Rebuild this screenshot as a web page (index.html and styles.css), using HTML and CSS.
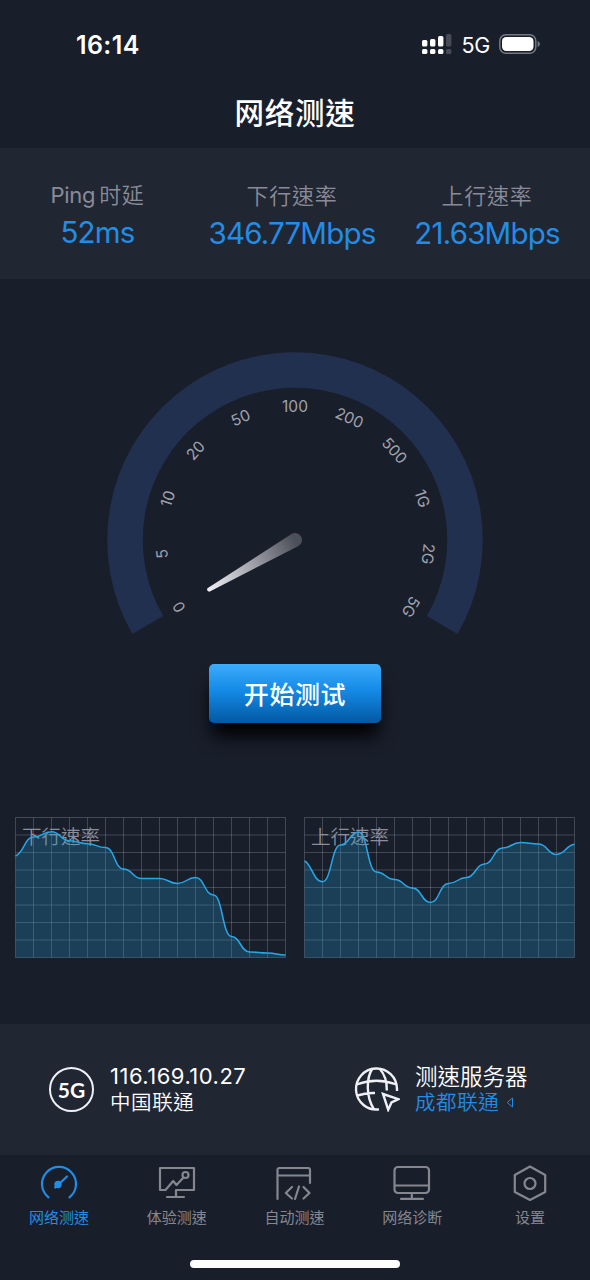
FILE: index.html
```html
<!DOCTYPE html>
<html lang="zh-Hant">
<head>
<meta charset="utf-8">
<title>网络测速</title>
<link rel="stylesheet" href="styles.css">
</head>
<body>
<div class="app">
  <header class="status">
    <span class="time">16:14</span>
    <div class="indicators">
      <svg class="signal" width="30" height="20" viewBox="0 0 30 20">
        <g fill="#fff"><rect x="0" y="6" width="5.4" height="6.5" rx="1.6"/><rect x="8" y="5" width="5.4" height="7.5" rx="1.6"/><rect x="16" y="2" width="5.4" height="10.5" rx="1.6"/><rect x="0" y="15" width="5.4" height="5" rx="1.6"/><rect x="8" y="15" width="5.4" height="5" rx="1.6"/><rect x="16" y="15" width="5.4" height="5" rx="1.6"/></g>
        <g fill="#474b57"><rect x="24" y="0" width="5.4" height="12.5" rx="1.6"/><rect x="24" y="15" width="5.4" height="5" rx="1.6"/></g>
      </svg>
      <span class="network">5G</span>
      <svg class="battery" width="42" height="20" viewBox="0 0 42 20">
        <rect x=".8" y=".8" width="36" height="18.4" rx="6" fill="none" stroke="#74777f" stroke-width="1.5"/>
        <rect x="3" y="3" width="31.5" height="14" rx="4.2" fill="#fff"/>
        <path d="M38.6 6.8Q41 8 41 10T38.6 13.2Z" fill="#74777f"/>
      </svg>
    </div>
  </header>
  <h1 class="title">网络测速</h1>

  <section class="stats">
    <div class="stat stat-ping"><span class="stat-label"><span class="latin">Ping</span>时延</span><span class="stat-value">52ms</span></div>
    <div class="stat"><span class="stat-label">下行速率</span><span class="stat-value">346.77Mbps</span></div>
    <div class="stat"><span class="stat-label">上行速率</span><span class="stat-value">21.63Mbps</span></div>
  </section>

  <main class="meter">
    <svg class="gauge" width="376" height="290" viewBox="-188 -188 376 290">
      <defs>
        <linearGradient id="needle" gradientUnits="userSpaceOnUse" x1="0" y1="101" x2="0" y2="0">
          <stop offset="0" stop-color="#f0f0f5"/><stop offset=".5" stop-color="#a2a3ab"/><stop offset="1" stop-color="#4c4f59"/>
        </linearGradient>
      </defs>
      <path d="M-147.2 85A170 170 0 1 1 147.2 85" fill="none" stroke="#22304f" stroke-width="35.5"/>
      <g class="ticks">
        <text transform="rotate(-120)" y="-128.3">0</text>
        <text transform="rotate(-96)" y="-128.3">5</text>
        <text transform="rotate(-72)" y="-128.3">10</text>
        <text transform="rotate(-48)" y="-128.3">20</text>
        <text transform="rotate(-24)" y="-128.3">50</text>
        <text y="-128.3">100</text>
        <text transform="rotate(24)" y="-128.3">200</text>
        <text transform="rotate(48)" y="-128.3">500</text>
        <text transform="rotate(72)" y="-128.3">1G</text>
        <text transform="rotate(96)" y="-128.3">2G</text>
        <text transform="rotate(120)" y="-128.3">5G</text>
      </g>
      <path transform="rotate(60)" d="M-7 0A7 7 0 0 1 7 0L1.9 100Q0 102.500 -1.900 100Z" fill="url(#needle)"/>
    </svg>
    <button class="start">开始测试</button>
  </main>

  <section class="charts">
    <div class="chart">
      <svg viewBox="-.5 -.5 271 140" width="271" height="140">
        <path class="grid" d="M0 0V140M18 0V140M36 0V140M54 0V140M72 0V140M90 0V140M108 0V140M126 0V140M144 0V140M162 0V140M180 0V140M198 0V140M216 0V140M234 0V140M252 0V140M270 0V140M0 0H270M0 17.500H270M0 35H270M0 52.500H270M0 70H270M0 87.500H270M0 105H270M0 122.500H270M0 140H270"/>
      </svg>
      <span class="chart-label">下行速率</span>
      <svg class="curve" viewBox="-.5 -.5 271 140" width="271" height="140">
        <path class="area" d="M0 38.500C9 35 9 19.500 18 19.500S27 14.200 36 14.200S45 23.200 54 23.200S63 26.200 72 26.200S81 30 90 30S99 51.500 108 51.500S117 61 126 61S135 61 144 61S153 66 162 66S171 60 180 60S189 77.500 198 77.500S207 119 216 119S225 134.500 234 134.500S243 135.500 252 135.500S261 137.500 270 137.500V140H0Z"/>
        <path class="line" d="M0 38.500C9 35 9 19.500 18 19.500S27 14.200 36 14.200S45 23.200 54 23.200S63 26.200 72 26.200S81 30 90 30S99 51.500 108 51.500S117 61 126 61S135 61 144 61S153 66 162 66S171 60 180 60S189 77.500 198 77.500S207 119 216 119S225 134.500 234 134.500S243 135.500 252 135.500S261 137.500 270 137.500"/>
      </svg>
    </div>
    <div class="chart">
      <svg viewBox="-.5 -.5 271 140" width="271" height="140">
        <path class="grid" d="M0 0V140M18 0V140M36 0V140M54 0V140M72 0V140M90 0V140M108 0V140M126 0V140M144 0V140M162 0V140M180 0V140M198 0V140M216 0V140M234 0V140M252 0V140M270 0V140M0 0H270M0 17.500H270M0 35H270M0 52.500H270M0 70H270M0 87.500H270M0 105H270M0 122.500H270M0 140H270"/>
      </svg>
      <span class="chart-label">上行速率</span>
      <svg class="curve" viewBox="-.5 -.5 271 140" width="271" height="140">
        <path class="area" d="M0 43.500C7 46 9 64.200 18 64.200S27 27.500 36 27.500S45 14.500 54 14.500S63 54.500 72 54.500S81 62 90 62S99 70.500 108 70.500S117 85 126 85S135 66 144 66S153 60 162 60S171 46.500 180 46.500S189 30.500 198 30.500S207 25 216 25S225 26.500 234 26.500S243 37 252 37S261 28 270 26.800V140H0Z"/>
        <path class="line" d="M0 43.500C7 46 9 64.200 18 64.200S27 27.500 36 27.500S45 14.500 54 14.500S63 54.500 72 54.500S81 62 90 62S99 70.500 108 70.500S117 85 126 85S135 66 144 66S153 60 162 60S171 46.500 180 46.500S189 30.500 198 30.500S207 25 216 25S225 26.500 234 26.500S243 37 252 37S261 28 270 26.800"/>
      </svg>
    </div>
  </section>

  <section class="info">
    <div class="info-item">
      <span class="badge">5G</span>
      <div class="info-text"><span class="info-main ip">116.169.10.27</span><span class="info-sub">中国联通</span></div>
    </div>
    <div class="info-item server">
      <svg class="globe" width="46" height="46" viewBox="0 0 46 46" fill="none" stroke="#eef0f5" stroke-width="2.400">
        <path d="M43 25V23A20.500 20.500 0 1 0 25 43.400"/>
        <path d="M18.500 2.500C12 12 12 31 20 43.300M25.500 2.500C31 8.500 33 15.500 32.800 24.500M2.500 18.500Q22.500 11 42.500 18.500M3.500 29.500Q12 26.500 21 27"/>
        <path d="M29 28L44.500 33.200L37.500 36.500L34.200 43.700Z"/>
      </svg>
      <div class="info-text"><span class="info-main">测速服务器</span><span class="info-sub link">成都联通<svg class="arrow" width="8" height="11" viewBox="0 0 8 11"><path d="M6.500 1V10L1.200 5.500Z" fill="none" stroke="currentColor"/></svg></span></div>
    </div>
  </section>

  <nav class="tabs">
    <a class="tab active">
      <svg viewBox="0 0 40 36"><path d="M9.500 32.300A17 17 0 1 1 30.500 32.300"/><path d="M19 20L28 11.500"/><circle cx="19" cy="19.500" r="2.600" fill="currentColor"/><path d="M17.500 21L16.200 22.500"/></svg>
      <span>网络测速</span>
    </a>
    <a class="tab">
      <svg viewBox="0 0 40 36"><path d="M8.500 25H3V3H37V25H19V31.500M10 32H27M8.500 25L16.200 16L19.500 20L26.500 12.500"/><circle cx="28.500" cy="10" r="3"/></svg>
      <span>体验测速</span>
    </a>
    <a class="tab">
      <svg viewBox="0 0 40 36"><path d="M3.500 34V5Q3.500 3 5.500 3H34Q36 3 36 5V18M3.500 10.500H36M18 22L11.800 28L18 33.500M25 21.500L21 34M29.500 22L35.500 28L29.500 33.500"/></svg>
      <span>自动测速</span>
    </a>
    <a class="tab">
      <svg viewBox="0 0 40 36"><rect x="2.500" y="2" width="34.500" height="26" rx="3.500"/><path d="M3 20.500H37M19.800 28V33.500M9 33.800H31"/></svg>
      <span>网络诊断</span>
    </a>
    <a class="tab">
      <svg viewBox="0 0 40 36"><path d="M20 1.500L35.200 10V27L20 35L4.800 27V10Z"/><circle cx="20" cy="18.500" r="5.500"/></svg>
      <span>设置</span>
    </a>
  </nav>
  <div class="home"></div>
</div>
</body>
</html>
```
FILE: styles.css
```css
* { box-sizing: border-box; }
body {
  margin: 0;
  background: #191e2b;
  font-family: Inter, "Noto Sans CJK TC", sans-serif;
  color: #fff;
}
svg { display: block; flex: none; }
.app { width: 590px; height: 1280px; display: flex; flex-direction: column; overflow: hidden; }
.status { height: 88px; padding: 0 49px 0 76px; display: flex; align-items: center; justify-content: space-between; flex: none; }
.time { font-size: 25px; font-weight: 600; letter-spacing: .4px; padding-top: 1px; }
.indicators { display: flex; align-items: center; }
.network { font-size: 21.5px; letter-spacing: -.3px; margin: 2px 9px 0; }
.title { margin: 0; height: 60px; line-height: 49px; text-align: center; font-size: 29.500px; font-weight: 500; letter-spacing: .7px; flex: none; padding-top: 1px; }

.stats { height: 131px; flex: none; background: #212633; display: grid; grid-template-columns: 195px 194px 196px; padding-top: 33px; }
.stat { display: flex; flex-direction: column; align-items: center; white-space: nowrap; }
.stat-ping { margin-top: -1px; }
.stat-label { font-size: 22px; line-height: 30px; letter-spacing: .7px; color: #898c98; font-weight: 350; }
.latin { letter-spacing: -.3px; margin-right: 4px; font-weight: 400; }
.stat-value { font-size: 29.500px; line-height: 44px; color: #228de6; letter-spacing: -.8px; }

.meter { height: 538px; flex: none; display: flex; flex-direction: column; align-items: center; padding-top: 73px; }
.gauge { margin-bottom: 21.500px; }
.ticks text { fill: #a0a3ad; font-size: 15.500px; text-anchor: middle; }
.start {
  width: 172px; height: 59px; flex: none; border: 0; border-radius: 5px; padding: 0;
  font: 500 25px Inter, "Noto Sans CJK TC", sans-serif; letter-spacing: .6px; color: #fff;
  background: linear-gradient(#3cacfc, #148ae6 45%, #0358a2);
  box-shadow: 0 16px 18px -3px #000;
}

.charts { height: 207px; flex: none; display: flex; gap: 18px; padding-left: 15px; }
.chart { position: relative; width: 271px; height: 140px; }
.chart svg { overflow: visible; }
.grid { fill: none; stroke: #aeb3c4; stroke-opacity: .28; }
.chart-label { position: absolute; left: 7px; top: 5px; font-size: 19.500px; line-height: 30px; font-weight: 350; color: #8c8e9b; }
.chart .curve { position: absolute; left: 0; top: 0; }
.area { fill: #1d9ed5; fill-opacity: .26; }
.line { fill: none; stroke: #27a7e7; stroke-width: 1.500; }

.info { height: 131px; flex: none; background: #212633; display: grid; grid-template-columns: 304px 1fr; padding: 38px 0 0 49px; }
.info-item { display: flex; gap: 16px; }
.badge { width: 45px; height: 45px; margin-top: 5px; padding-bottom: 1px; border: 2px solid #edf0f5; border-radius: 50%; display: grid; place-items: center; font-size: 21px; font-weight: 700; font-family: Lato, sans-serif; }
.info-text { display: flex; flex-direction: column; white-space: nowrap; }
.info-main { font-size: 22.500px; line-height: 28px; padding-top: 1px; margin-bottom: -1px; font-weight: 350; }
.info-main.ip { font-size: 22px; letter-spacing: .5px; font-weight: 400; padding: 0; margin: 0; }
.info-sub { font-size: 20.500px; line-height: 25px; letter-spacing: .6px; display: flex; align-items: center; font-weight: 350; }
.server { gap: 15px; padding-left: 1px; }
.globe { margin-top: 4px; }
.link { color: #228de6; }
.arrow { margin-left: 7px; }

.tabs { height: 90px; flex: none; display: grid; grid-template-columns: repeat(5, 1fr); padding: 10px 1px 0 0; }
.tab { display: flex; flex-direction: column; align-items: center; color: #85878e; font-size: 15px; line-height: 24px; gap: 5px; }
.tab svg { width: 40px; height: 36px; fill: none; stroke: currentColor; stroke-width: 2.200; stroke-linecap: round; stroke-linejoin: round; }
.tab.active { color: #228de6; }
.home { width: 210px; height: 8px; border-radius: 4px; background: #fff; margin: 15px auto 0; flex: none; }
```
